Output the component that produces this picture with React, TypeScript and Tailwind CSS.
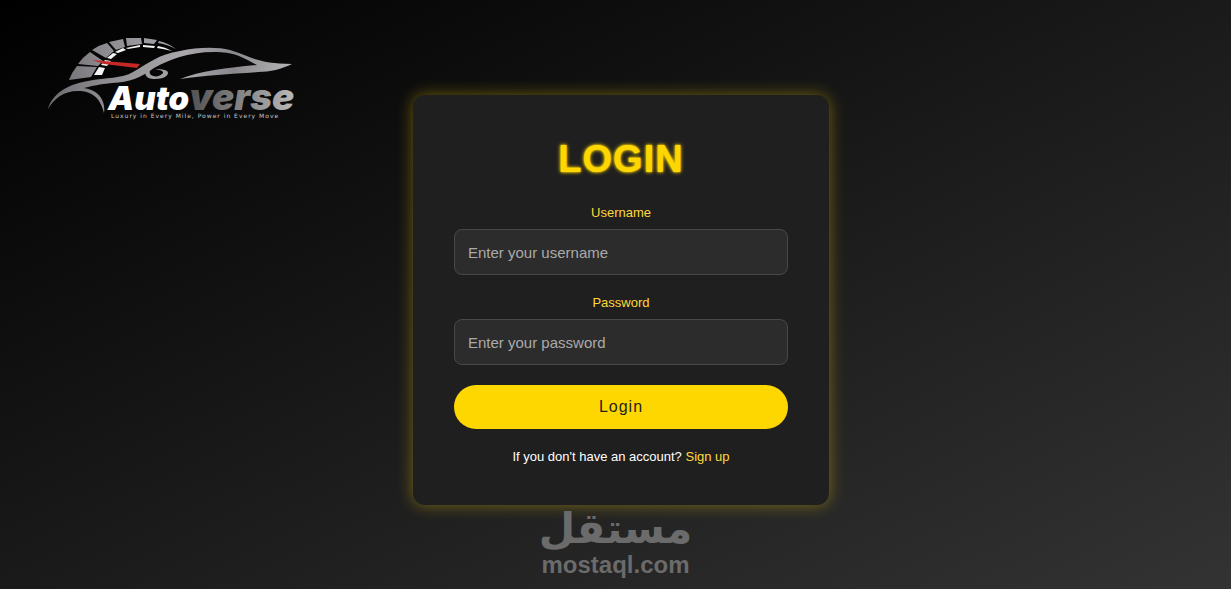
import { useState } from "react";
import type { FormEvent } from "react";

const FIELDS = [
  { id: "username", label: "Username", type: "text", placeholder: "Enter your username" },
  { id: "password", label: "Password", type: "password", placeholder: "Enter your password" },
];

function Logo() {
  return (
    <svg viewBox="0 0 252 90" className="h-[90px] w-[252px]" role="img" aria-label="Autoverse">
      <defs>
        <linearGradient id="silver" gradientUnits="userSpaceOnUse" x1="0" x2="250" y1="0" y2="0">
          <stop offset="0" stopColor="#6d6b6f" />
          <stop offset="0.25" stopColor="#8f8d91" />
          <stop offset="0.55" stopColor="#aaa8ac" />
          <stop offset="0.75" stopColor="#8a888c" />
          <stop offset="1" stopColor="#b8b7b9" />
        </linearGradient>
        <linearGradient id="verse" gradientUnits="userSpaceOnUse" x1="142" x2="248" y1="0" y2="0">
          <stop offset="0" stopColor="#505050" />
          <stop offset="1" stopColor="#b8b8b8" />
        </linearGradient>
      </defs>

      {/* speedometer */}
      <g fill="url(#silver)">
        <path d="M23 44 Q26 36 31 30 L51 31 L45 41 Z" />
        <path d="M32 28 Q37 21 44 16 L57 25 L52 30 Z" />
        <path d="M46 14 Q53 9 61 7 L68 15 L60 22 Z" />
        <path d="M63 6 L77 3 L79 11 L70 14 Z" />
        <path d="M80 2 L95 2 L96 8 L81 10 Z" />
        <path d="M98 2 L111 4 L108 8 L98 7 Z" />
        <path d="M113 5 Q122 7 130 13 Q120 8 112 7 Z" />
      </g>
      <g fill="#f4f4f4">
        <path d="M48 39 L53 31 L59 32 L56 39 Z" />
        <path d="M55 29 L59 24 L65 25 L61 30 Z" />
        <path d="M61 22 L67 17 L71 18 L65 23 Z" />
        <path d="M69 16 L77 12 L80 14 L72 17 Z" />
        <path d="M80 12 L94 9 L94 11 L82 13 Z" />
        <path d="M97 9 L109 10 L108 12 L97 11 Z" />
        <path d="M112 10 Q119 11 126 15 Q118 13 111 12 Z" />
      </g>
      <path d="M46 24 L94 28 L91 32 L58 28 Z" fill="#c62828" />

      {/* car outline */}
      <g fill="url(#silver)">
        <path d="M2 73 C6 58 22 48 42 45 C60 41 76 43 87 36 C101 28 113 18 134 15 C152 11 172 11 184 14 C202 19 210 28 246 28 C236 33 224 36 212 36 C184 38 160 39 134 43 C154 35 182 32 211 29 C194 20 188 16 168 16 C142 16 122 24 108 32 C94 42 84 46 66 47 C54 48 46 50 38 52 C52 54 60 64 58 77 C54 60 44 55 32 55 C17 55 8 63 2 73 Z" />
        <path d="M104 31 C96 37 99 43 109 43 C117 43 122 40 122 37 C122 34 117 33 109 33 C116 34 119 36 116 38 C113 41 108 41 105 39 C103 37 103 34 107 30 Z" />
      </g>

      <text x="62" y="74" fontFamily="Inter, 'Open Sans', sans-serif" fontStyle="italic" fontWeight="900">
        <tspan fontSize="33" fill="#fff">
          Auto
        </tspan>
        <tspan fontSize="37" fill="url(#verse)">
          verse
        </tspan>
      </text>
      <text x="65" y="82" fontSize="6" fill="#c8c8c8" fontFamily="'DejaVu Sans', sans-serif" letterSpacing="1">
        Luxury in Every Mile, Power in Every Move
      </text>
    </svg>
  );
}

function LoginForm() {
  const [values, setValues] = useState<Record<string, string>>({ username: "", password: "" });

  function handleSubmit(e: FormEvent) {
    e.preventDefault();
  }

  return (
    <form
      onSubmit={handleSubmit}
      className="w-full rounded-xl bg-[#1f1f1f] px-[41px] pt-[42px] pb-10 text-center shadow-[0_0_16px_rgba(255,215,0,0.4)]"
    >
      <h1 className="mb-6 text-[38px] leading-11 font-bold tracking-[1px] text-[#ffd700] [text-shadow:0_0_2px_#ffd700,0_0_4px_#ffd700]">
        LOGIN
      </h1>
      {FIELDS.map(({ id, label, type, placeholder }) => (
        <div key={id} className="mb-5">
          <label htmlFor={id} className="mb-2 block text-[13px] leading-4 text-[#ffd83a]">
            {label}
          </label>
          <input
            id={id}
            type={type}
            placeholder={placeholder}
            value={values[id]}
            onChange={(e) => setValues({ ...values, [id]: e.target.value })}
            className="block h-[46px] w-full rounded-lg border border-[#484848] bg-[#2c2c2c] px-[13px] text-[15px] text-white outline-none placeholder:text-[#aaa] focus:border-[#ffd700]"
          />
        </div>
      ))}
      <button type="submit" className="h-11 w-full rounded-full bg-[#ffd700] text-base tracking-[1px] text-[#1f1f1f]">
        Login
      </button>
      <p className="mt-5 text-[13px] leading-4 text-white">
        If you don't have an account?{" "}
        <a href="#signup" className="text-[#ffd83a]">
          Sign up
        </a>
      </p>
    </form>
  );
}

function Watermark() {
  return (
    <div className="pointer-events-none absolute inset-x-0 bottom-3 flex flex-col items-center font-bold text-[#6b6b6b]">
      <span lang="ar" dir="rtl" className="font-['DejaVu_Sans',sans-serif] text-[42px] leading-12">
        مستقل
      </span>
      <span className="text-2xl leading-6">mostaql.com</span>
    </div>
  );
}

export default function App() {
  return (
    <div className="relative grid min-h-screen grid-cols-[1fr_minmax(0,416px)_1fr] bg-linear-to-br/srgb from-black via-[#1a1a1a] to-[#333] pl-[11px] font-['Liberation_Sans',Arial,sans-serif]">
      <header className="pt-9 pl-[35px]">
        <Logo />
      </header>
      <main className="pt-[95px]">
        <LoginForm />
      </main>
      <Watermark />
    </div>
  );
}
